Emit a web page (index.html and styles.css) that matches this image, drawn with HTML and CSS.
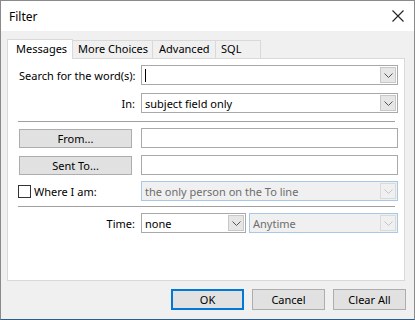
FILE: index.html
```html
<!DOCTYPE html>
<html>
<head>
<meta charset="utf-8">
<link rel="stylesheet" href="styles.css">
</head>
<body>
<div class="dialog">
  <div class="titlebar">
    <span class="title">Filter</span>
    <svg class="close" width="12" height="12" viewBox="0 0 12 12"><path d="M0.5 0.5 L11.5 11.5 M11.5 0.5 L0.5 11.5" stroke="#222" stroke-width="1.1" fill="none"/></svg>
  </div>
  <div class="body">
    <div class="tabs">
      <div class="tab selected">Messages</div>
      <div class="tab t2">More Choices</div>
      <div class="tab t3">Advanced</div>
      <div class="tab t4">SQL</div>
    </div>
    <div class="panel">
      <div class="row r1">
        <div class="label">Search for the word(s):</div>
        <div class="combo"><span class="caret"></span><span class="val"></span><span class="drop"><svg width="9" height="5" viewBox="0 0 9 5"><path d="M0.5 0.5 L4.5 4.5 L8.5 0.5" stroke="#555" fill="none"/></svg></span></div>
      </div>
      <div class="row r2">
        <div class="label">In:</div>
        <div class="combo"><span class="val">subject field only</span><span class="drop"><svg width="9" height="5" viewBox="0 0 9 5"><path d="M0.5 0.5 L4.5 4.5 L8.5 0.5" stroke="#555" fill="none"/></svg></span></div>
      </div>
      <div class="sep s1"></div>
      <div class="row r3">
        <div class="btncell"><div class="btn side">From...</div></div>
        <div class="input"></div>
      </div>
      <div class="row r4">
        <div class="btncell"><div class="btn side">Sent To...</div></div>
        <div class="input"></div>
      </div>
      <div class="row r5">
        <div class="check"><span class="box"></span><span>Where I am:</span></div>
        <div class="combo disabled"><span class="val">the only person on the To line</span><span class="drop"><svg width="9" height="5" viewBox="0 0 9 5"><path d="M0.5 0.5 L4.5 4.5 L8.5 0.5" stroke="#c4c4c4" fill="none"/></svg></span></div>
      </div>
      <div class="sep s2"></div>
      <div class="row r6">
        <div class="label">Time:</div>
        <div class="pair">
          <div class="combo small"><span class="val">none</span><span class="drop"><svg width="9" height="5" viewBox="0 0 9 5"><path d="M0.5 0.5 L4.5 4.5 L8.5 0.5" stroke="#555" fill="none"/></svg></span></div>
          <div class="combo disabled grow"><span class="val">Anytime</span><span class="drop"><svg width="9" height="5" viewBox="0 0 9 5"><path d="M0.5 0.5 L4.5 4.5 L8.5 0.5" stroke="#c4c4c4" fill="none"/></svg></span></div>
        </div>
      </div>
    </div>
    <div class="footer">
      <div class="btn foot default">OK</div>
      <div class="btn foot">Cancel</div>
      <div class="btn foot">Clear All</div>
    </div>
  </div>
</div>
</body>
</html>
```
FILE: styles.css
```css
* { box-sizing: border-box; }
html, body { margin: 0; padding: 0; }
body {
  width: 415px; height: 320px; overflow: hidden;
  font-family: "Noto Sans", "Open Sans", sans-serif;
  font-size: 11px; color: #000;
}
.dialog {
  width: 415px; height: 320px;
  border: 1px solid #8a8a8a;
  border-bottom-color: #2b5d8c;
  background: #f0f0f0;
  display: flex; flex-direction: column;
}
.titlebar {
  height: 30px; background: #fff;
  display: flex; align-items: center; justify-content: space-between;
  padding: 0 10px 0 8px;
}
.title { font-size: 12px; }
.body {
  flex: 1; display: flex; flex-direction: column;
  padding: 8px 9px 0 6px;
}
.tabs { display: flex; align-items: flex-end; height: 19px; position: relative; z-index: 1; }
.tab {
  height: 18px; line-height: 16px; white-space: nowrap;
  border: 1px solid #d9d9d9; border-bottom: none; border-left: none;
  padding-left: 5px; background: #f0f0f0;
}
.tab.selected {
  width: 66px; height: 20px; line-height: 18px; background: #fff;
  border-left: 1px solid #d9d9d9; margin-bottom: -1px;
  padding-left: 8px;
}
.t2 { width: 80px; }
.t3 { width: 63px; padding-left: 6px; }
.t4 { width: 45px; }
.panel {
  height: 223px; background: #fff;
  border: 1px solid #d9d9d9;
  padding: 6px 7px 0 10px;
}
.row {
  display: grid; grid-template-columns: 123px 257px;
  align-items: center; height: 20px;
}
.r2 { margin-top: 8px; }
.sep { height: 1px; background: #a0a0a0; margin-right: 2px; }
.s1 { margin-top: 8px; }
.r3 { margin-top: 6px; }
.r4 { margin-top: 7px; }
.r5 { margin-top: 6px; }
.s2 { margin-top: 5px; }
.r6 { margin-top: 6px; }
.label { text-align: right; padding-right: 6px; white-space: nowrap; }
.r1 .label { text-align: left; padding-left: 1px; }
.combo, .input {
  height: 20px; border: 1px solid #a9a9a9; background: #fff;
  display: flex; align-items: center; position: relative;
}
.val { flex: 1; padding-left: 3px; white-space: nowrap; overflow: hidden; }
.caret { width: 1px; height: 13px; background: #000; margin-left: 3px; }
.drop {
  width: 16px; height: 16px; margin-right: 1px;
  background: #e6e6e6; border: 1px solid #c8c8c8;
  display: flex; align-items: center; justify-content: center;
}
.combo.disabled { background: #f0f0f0; border-color: #a8c8ea; color: #6d6d6d; }
.combo.disabled .drop { background: #f0f0f0; border-color: #dadada; }
.pair { display: flex; gap: 3px; }
.combo.small { width: 105px; }
.combo.grow { flex: 1; }
.btncell { display: flex; }
.btn {
  background: #e1e1e1; border: 1px solid #adadad;
  display: flex; align-items: center; justify-content: center;
}
.btn.side { width: 113px; height: 19px; margin-left: 1px; }
.check { display: flex; align-items: center; gap: 3px; }
.box { width: 13px; height: 13px; border: 1px solid #333; background: #fff; }
.footer {
  display: flex; justify-content: flex-end; gap: 8px;
  margin-top: 8px; margin-right: -1px;
}
.btn.foot { width: 73px; height: 21px; }
.btn.default { border: 2px solid #0078d7; }
```
